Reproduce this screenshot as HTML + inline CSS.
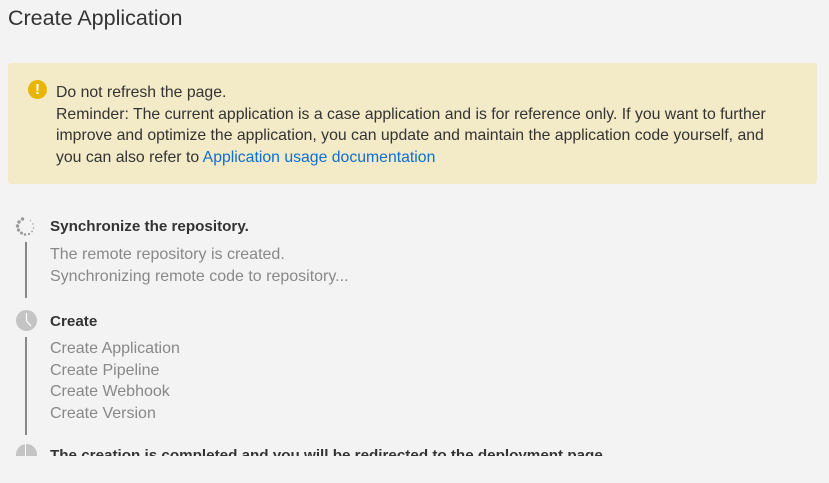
<!DOCTYPE html>
<html><head><meta charset="utf-8"><style>
body{margin:0;background:#f3f3f3;font-family:"Liberation Sans",sans-serif;width:829px;height:483px;overflow:hidden;position:relative}
.t{position:absolute;left:8px;top:6px;font-size:21.5px;color:#333}
.b{position:absolute;left:8px;top:63px;width:809px;height:121px;background:#f3eac8;border-radius:3px}
.b .ic{position:absolute;left:20px;top:17px;width:19px;height:19px;border-radius:50%;background:#e8b500;color:#fff;font-weight:bold;font-size:15px;text-align:center;line-height:19px}
.b .tx{position:absolute;left:48px;top:19px;width:732px;font-size:15.8px;line-height:21.5px;color:#333}
a{color:#0b6fd1;text-decoration:none}
.s{position:absolute;font-size:16px}
.h{color:#333;font-weight:bold;font-size:15.2px}
.g{color:#888;line-height:21.5px}
.ln{position:absolute;left:25px;width:2px;background:#888}
.dot{position:absolute;left:16px;width:21px;height:21px;border-radius:50%;background:#c4c4c4}
.clip{position:absolute;left:0;top:440px;width:829px;height:16px;overflow:hidden}
</style></head><body>
<div class="t">Create Application</div>
<div class="b"><div class="ic">!</div><div class="tx">Do not refresh the page.<br>Reminder: The current application is a case application and is for reference only. If you want to further improve and optimize the application, you can update and maintain the application code yourself, and you can also refer to <a>Application usage documentation</a></div></div>
<svg style="position:absolute;left:14px;top:216px" width="24" height="22" viewBox="0 0 24 22"><g fill="#999"><circle cx="5" cy="6" r="1.7"/><circle cx="3.5" cy="10" r="1.7"/><circle cx="4.5" cy="14" r="1.6"/><circle cx="7.5" cy="17" r="1.5"/><circle cx="11" cy="18.5" r="1.3"/><circle cx="15" cy="18" r="1.1"/><circle cx="18" cy="15.5" r=".9"/><circle cx="19.5" cy="12" r=".8"/><circle cx="19" cy="8" r=".7"/><circle cx="16.5" cy="4.5" r=".6"/><circle cx="8.5" cy="3" r="1.7"/></g></svg>
<div class="s h" style="left:50px;top:218px">Synchronize the repository.</div>
<div class="ln" style="top:242px;height:56px"></div>
<div class="s g" style="left:50px;top:244px">The remote repository is created.<br>Synchronizing remote code to repository...</div>
<div class="dot" style="top:310px"></div>
<svg style="position:absolute;left:16px;top:310px" width="21" height="21"><path d="M10.5 3V11L15 16" stroke="#fff" stroke-width="1.2" fill="none"/></svg>
<div class="s h" style="left:50px;top:313px">Create</div>
<div class="ln" style="top:337px;height:98px"></div>
<div class="s g" style="left:50px;top:338px">Create Application<br>Create Pipeline<br>Create Webhook<br>Create Version</div>
<div class="clip"><div class="dot" style="top:4px"></div><div style="position:absolute;left:25px;top:4px;width:1px;height:12px;background:#fff"></div><div class="s h" style="left:50px;top:7px">The creation is completed and you will be redirected to the deployment page</div></div>
</body></html>
